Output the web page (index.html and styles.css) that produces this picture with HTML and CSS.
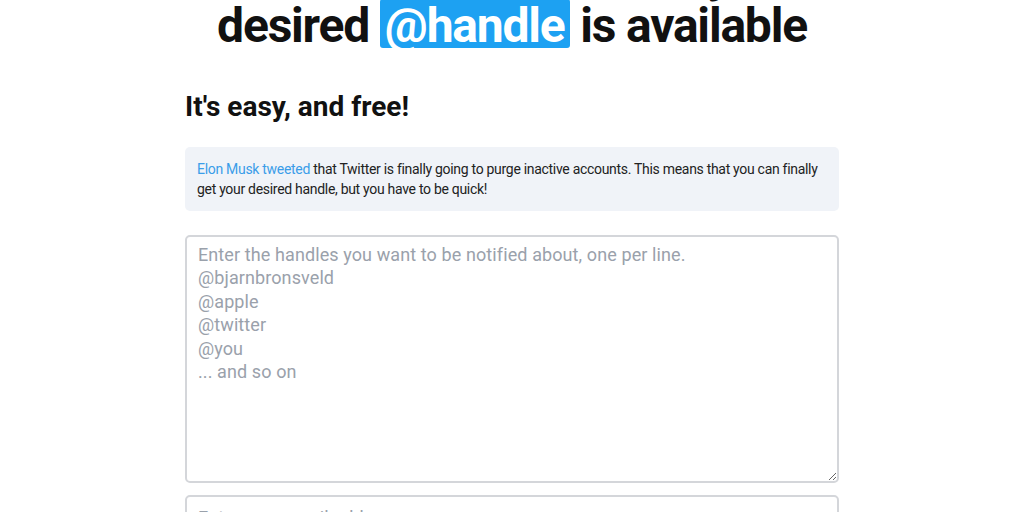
FILE: index.html
```html
<!DOCTYPE html>
<html>
<head>
<meta charset="utf-8">
<link rel="stylesheet" href="styles.css">
</head>
<body>
<main class="page">
  <h1 class="hero">Get a notification when your<br>desired <span class="hl">@handle</span> is available</h1>
  <section class="content">
    <h2 class="sub">It's easy, and free!</h2>
    <p class="note"><a class="link" href="#">Elon Musk tweeted</a> that Twitter is finally going to purge inactive accounts. This means that you can finally get your desired handle, but you have to be quick!</p>
    <form class="form">
      <textarea class="handles" placeholder="Enter the handles you want to be notified about, one per line.
@bjarnbronsveld
@apple
@twitter
@you
... and so on"></textarea>
      <input class="email" type="email" placeholder="Enter your email address">
    </form>
  </section>
</main>
</body>
</html>
```

FILE: styles.css
```css
html, body {
  margin: 0;
  padding: 0;
  background: #ffffff;
  overflow: hidden;
}
body {
  font-family: Roboto, "Noto Sans", sans-serif;
  color: #111111;
}
.page {
  display: flex;
  flex-direction: column;
  align-items: center;
}
.hero {
  margin: -49px 0 0 0;
  font-size: 48px;
  line-height: 48px;
  font-weight: 700;
  text-align: center;
  letter-spacing: -1.2px;
}
.hl {
  display: inline-block;
  background: #1da1f2;
  color: #ffffff;
  line-height: 38px;
  padding: 8px 5px 3px 5px;
  border-radius: 3px;
}
.content {
  width: 654px;
  display: flex;
  flex-direction: column;
}
.sub {
  margin: 41px 0 24px 0;
  font-size: 28px;
  line-height: 32px;
  font-weight: 700;
}
.note {
  margin: 0 0 24px 0;
  background: #f0f3f8;
  border-radius: 5px;
  padding: 12px;
  font-size: 14px;
  line-height: 20px;
  letter-spacing: -0.3px;
  color: #222222;
}
.link {
  color: #3a9de9;
  text-decoration: none;
}
.form {
  display: flex;
  flex-direction: column;
  gap: 12px;
}
.handles, .email {
  font-family: inherit;
  font-size: 18px;
  line-height: 23.4px;
  letter-spacing: 0.1px;
  border: 2px solid #d4d6da;
  border-radius: 5px;
  padding: 6px 11px;
  color: #111;
  outline: none;
  box-sizing: border-box;
  width: 100%;
}
.handles {
  height: 248px;
  resize: vertical;
}
.email {
  height: 44px;
}
.handles::placeholder, .email::placeholder {
  color: #9aa1ab;
  opacity: 1;
}
```
